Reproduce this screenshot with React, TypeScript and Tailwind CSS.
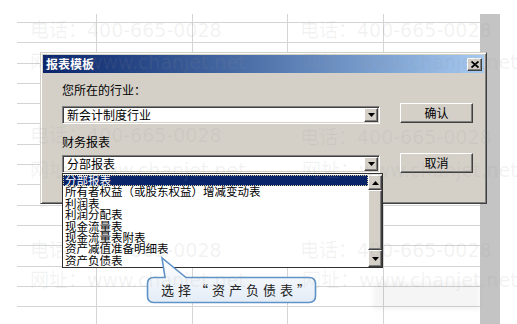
const font = "font-['Noto_Sans_CJK_SC','Noto_Sans',sans-serif]"

const raised =
  'border border-t-white border-l-white border-r-[#404040] border-b-[#404040] bg-[#d4d0c8] shadow-[inset_-1px_-1px_#808080]'
const sunken =
  'border border-t-[#808080] border-l-[#808080] border-r-white border-b-white shadow-[inset_1px_1px_#404040,inset_-1px_-1px_#d4d0c8]'

const items = [
  '分部报表',
  '所有者权益（或股东权益）增减变动表',
  '利润表',
  '利润分配表',
  '现金流量表',
  '现金流量表附表',
  '资产减值准备明细表',
  '资产负债表',
]

const marks = [
  { left: 'left-[30px]', top: 'top-[19px]', text: '电话：400-665-0028' },
  { left: 'left-[30px]', top: 'top-[51px]', text: '网址：www.chanjet.net' },
  { left: 'left-[300px]', top: 'top-[19px]', text: '电话：400-665-0028' },
  { left: 'left-[302px]', top: 'top-[51px]', text: '网址：www.chanjet.net' },
  { left: 'left-[30px]', top: 'top-[124px]', text: '电话：400-665-0028' },
  { left: 'left-[30px]', top: 'top-[159px]', text: '网址：www.chanjet.net' },
  { left: 'left-[300px]', top: 'top-[126px]', text: '电话：400-665-0028' },
  { left: 'left-[302px]', top: 'top-[159px]', text: '网址：www.chanjet.net' },
  { left: 'left-[30px]', top: 'top-[239px]', text: '电话：400-665-0028' },
  { left: 'left-[30px]', top: 'top-[269px]', text: '网址：www.chanjet.net' },
  { left: 'left-[300px]', top: 'top-[239px]', text: '电话：400-665-0028' },
  { left: 'left-[302px]', top: 'top-[269px]', text: '网址：www.chanjet.net' },
]

function DownArrow() {
  return (
    <svg width="7" height="4" viewBox="0 0 7 4">
      <polygon points="0,0 7,0 3.5,4" fill="#000" />
    </svg>
  )
}

function UpArrow() {
  return (
    <svg width="7" height="4" viewBox="0 0 7 4">
      <polygon points="0,4 7,4 3.5,0" fill="#000" />
    </svg>
  )
}

function Combo({ text }: { text: string }) {
  return (
    <div className={`flex h-[18px] w-[318px] bg-white p-[1px] ${sunken}`}>
      <div className="flex-1 pl-[3px] text-[12px] leading-[14px] text-black">{text}</div>
      <div className={`flex h-[14px] w-[14px] items-center justify-center ${raised}`}>
        <DownArrow />
      </div>
    </div>
  )
}

function Button({ label }: { label: string }) {
  return (
    <div className={`flex h-[20px] w-[73px] items-center justify-center text-[12px] text-black ${raised}`}>
      {label}
    </div>
  )
}

export default function App() {
  const cells = Array.from({ length: 16 * 5 })

  return (
    <div className={`relative h-[324px] w-[517px] overflow-hidden bg-white ${font}`}>
      {/* spreadsheet behind */}
      <div className="flex h-full pt-[14px]">
        <div className="w-[17px]" />
        <div className="grid h-full w-[463px] grid-cols-[80px_96px_95px_96px_96px] grid-rows-[9px_20px_21px_20px_20px_20px_21px_20px_20px_21px_20px_20px_21px_20px_20px_17px]">
          {cells.map((_, i) => (
            <div
              key={i}
              className={`border-[#d4d4d4] ${i % 5 === 4 ? '' : 'border-r'} ${i >= 75 ? '' : 'border-b'}`}
            />
          ))}
        </div>
        <div className="h-full w-[20px] bg-[#c4c4c4]" />
      </div>

      {/* dialog */}
      <div className="absolute left-[40px] top-[52px] h-[152px] w-[447px] border border-t-[#d4d0c8] border-l-[#d4d0c8] border-r-[#404040] border-b-[#404040] bg-[#d4d0c8] p-[2px] shadow-[inset_1px_1px_#fff,inset_-1px_-1px_#808080]">
        <div className="flex h-[18px] items-center justify-between bg-linear-to-r from-[#0a246a] to-[#a6caf0] pl-[3px] pr-[2px]">
          <span className="text-[12px] font-bold leading-[14px] text-white">报表模板</span>
          <div className={`flex h-[13px] w-[15px] items-center justify-center ${raised}`}>
            <svg width="8" height="7" viewBox="0 0 8 7">
              <path d="M0.5 0.5 L7.5 6.5 M7.5 0.5 L0.5 6.5" stroke="#000" strokeWidth="1.8" />
            </svg>
          </div>
        </div>

        <div className="flex gap-[20px] pl-[19px]">
          <div className="flex flex-col pt-[9px]">
            <div className="h-[16px] text-[12px] leading-[16px] text-black">您所在的行业：</div>
            <div className="mt-[8px]">
              <Combo text="新会计制度行业" />
            </div>
            <div className="mt-[10px] h-[16px] text-[12px] leading-[16px] text-black">财务报表</div>
            <div className="mt-[5px]">
              <Combo text="分部报表" />
            </div>
          </div>
          <div className="flex flex-col gap-[30px] pt-[30px]">
            <Button label="确认" />
            <Button label="取消" />
          </div>
        </div>

        {/* open drop-down list */}
        <div className="absolute left-[21px] top-[120px] flex h-[95px] w-[321px] border border-[#303030] bg-white">
          <div className="flex-1 pt-[1px]">
            {items.map((item, i) => (
              <div
                key={item}
                className={`h-[11.4px] whitespace-nowrap pl-[2px] text-[11.5px] leading-[11.4px] ${
                  i === 0
                    ? 'bg-[#0a246a] text-white outline-1 -outline-offset-1 outline-dotted outline-[#d8d0a0]'
                    : 'text-black'
                }`}
              >
                {item}
              </div>
            ))}
          </div>
          <div className="flex w-[14px] flex-col bg-[#e8e6e0] pt-[1px]">
            <div className={`flex h-[15px] items-center justify-center ${raised}`}>
              <UpArrow />
            </div>
            <div className={`flex-1 ${raised}`} />
            <div className={`flex h-[17px] items-center justify-center ${raised}`}>
              <DownArrow />
            </div>
          </div>
        </div>
      </div>

      {/* faint ghost box */}
      <div className="absolute left-[373px] top-[282px] h-[28px] w-[107px] rounded bg-black/[0.04] blur-[2px]" />

      {/* callout */}
      <div className="absolute left-[146px] top-[254px] h-[52px] w-[172px]">
        <svg className="absolute inset-0" width="172" height="52" viewBox="0 0 172 52">
          <defs>
            <linearGradient id="cg" x1="0" y1="0" x2="0" y2="1">
              <stop offset="0" stopColor="#ffffff" />
              <stop offset="1" stopColor="#e3ecf6" />
            </linearGradient>
          </defs>
          <path
            d="M7.5 23.5 H19 L16 4 L40 23.5 H163 Q169.5 23.5 169.5 30 V42 Q169.5 48.5 163 48.5 H7.5 Q1.5 48.5 1.5 42 V30 Q1.5 23.5 7.5 23.5 Z"
            fill="url(#cg)"
            stroke="#5f93c8"
            strokeWidth="1.6"
          />
        </svg>
        <div className="absolute left-[15px] top-[26px] whitespace-nowrap text-[13px] leading-[20px] tracking-[4px] text-[#222]">
          选择“资产负债表”
        </div>
      </div>

      {/* watermark */}
      {marks.map((m, i) => (
        <div
          key={i}
          className={`pointer-events-none absolute ${m.left} ${m.top} whitespace-nowrap font-['DejaVu_Sans','Noto_Sans_CJK_SC',sans-serif] text-[19px] leading-[22px] text-[rgba(150,150,150,0.12)]`}
        >
          {m.text}
        </div>
      ))}
    </div>
  )
}
